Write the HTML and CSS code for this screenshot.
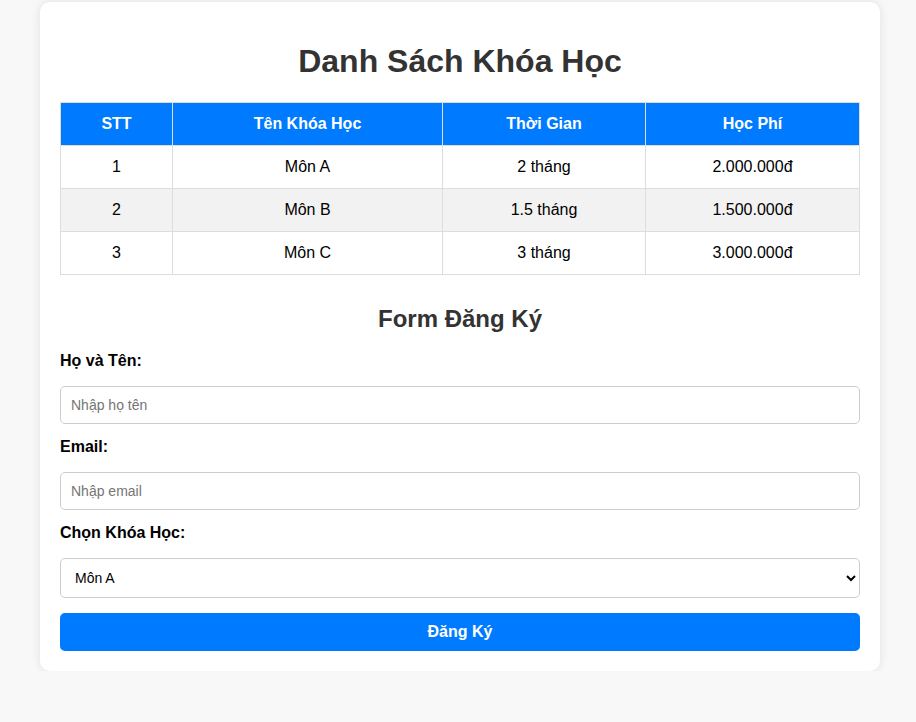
FILE: index.html
```html
<!DOCTYPE html>
<html lang="vi">
<head>
<meta charset="UTF-8">
<title>Danh Sách Khóa Học</title>
<link rel="stylesheet" href="styles.css">
</head>
<body>
<div class="container">
  <h1>Danh Sách Khóa Học</h1>
  <table class="courses">
    <colgroup>
      <col class="c1"><col class="c2"><col class="c3"><col class="c4">
    </colgroup>
    <thead>
      <tr><th>STT</th><th>Tên Khóa Học</th><th>Thời Gian</th><th>Học Phí</th></tr>
    </thead>
    <tbody>
      <tr><td>1</td><td>Môn A</td><td>2 tháng</td><td>2.000.000đ</td></tr>
      <tr><td>2</td><td>Môn B</td><td>1.5 tháng</td><td>1.500.000đ</td></tr>
      <tr><td>3</td><td>Môn C</td><td>3 tháng</td><td>3.000.000đ</td></tr>
    </tbody>
  </table>

  <h2>Form Đăng Ký</h2>
  <form class="reg-form">
    <label for="name">Họ và Tên:</label>
    <input type="text" id="name" placeholder="Nhập họ tên">
    <label for="email">Email:</label>
    <input type="email" id="email" placeholder="Nhập email">
    <label for="course">Chọn Khóa Học:</label>
    <select id="course">
      <option>Môn A</option>
      <option>Môn B</option>
      <option>Môn C</option>
    </select>
    <button type="button">Đăng Ký</button>
  </form>
</div>
</body>
</html>
```

FILE: styles.css
```css
html, body {
  margin: 0;
}
body {
  padding: 0 0 0 4px;
  background: #f8f8f8;
  font-family: "Liberation Sans", Arial, sans-serif;
  color: #000;
}
.container {
  max-width: 800px;
  margin: 2px auto 0;
  padding: 20px;
  background: #fff;
  border-radius: 10px;
  box-shadow: 0 0 10px rgba(0, 0, 0, 0.1);
}
h1 {
  text-align: center;
  color: #333;
  font-size: 32px;
  margin: 21.44px 0;
}
h2 {
  text-align: center;
  color: #333;
  font-size: 24px;
  margin: 30px 0 19.5px;
}
.courses {
  width: calc(100% - 1px);
  border-collapse: collapse;
  table-layout: fixed;
}
.c1 { width: 112px; }
.c2 { width: 270px; }
.c3 { width: 203px; }
.c4 { width: 214px; }
.courses th, .courses td {
  border: 1px solid #ddd;
  padding: 12px;
  text-align: center;
  font-size: 16px;
}
.courses th {
  background: #007bff;
  color: #fff;
  font-weight: bold;
}
.courses tbody tr:nth-child(even) {
  background: #f2f2f2;
}
.reg-form label {
  display: block;
  font-weight: bold;
  font-size: 16px;
  margin: 0 0 15.5px;
}
.reg-form input,
.reg-form select {
  display: block;
  width: 100%;
  box-sizing: border-box;
  padding: 10px;
  border: 1px solid #ccc;
  border-radius: 5px;
  font-family: "Liberation Sans", Arial, sans-serif;
  font-size: 14px;
  margin: 0 0 14.5px;
  background: #fff;
  color: #000;
}
.reg-form select {
  height: 40px;
  padding: 0 10px;
  margin-bottom: 15px;
}
.reg-form button {
  display: block;
  width: 100%;
  padding: 10px;
  border: none;
  border-radius: 5px;
  background: #007bff;
  color: #fff;
  font-family: "Liberation Sans", Arial, sans-serif;
  font-size: 16px;
  font-weight: bold;
  cursor: pointer;
}
```
